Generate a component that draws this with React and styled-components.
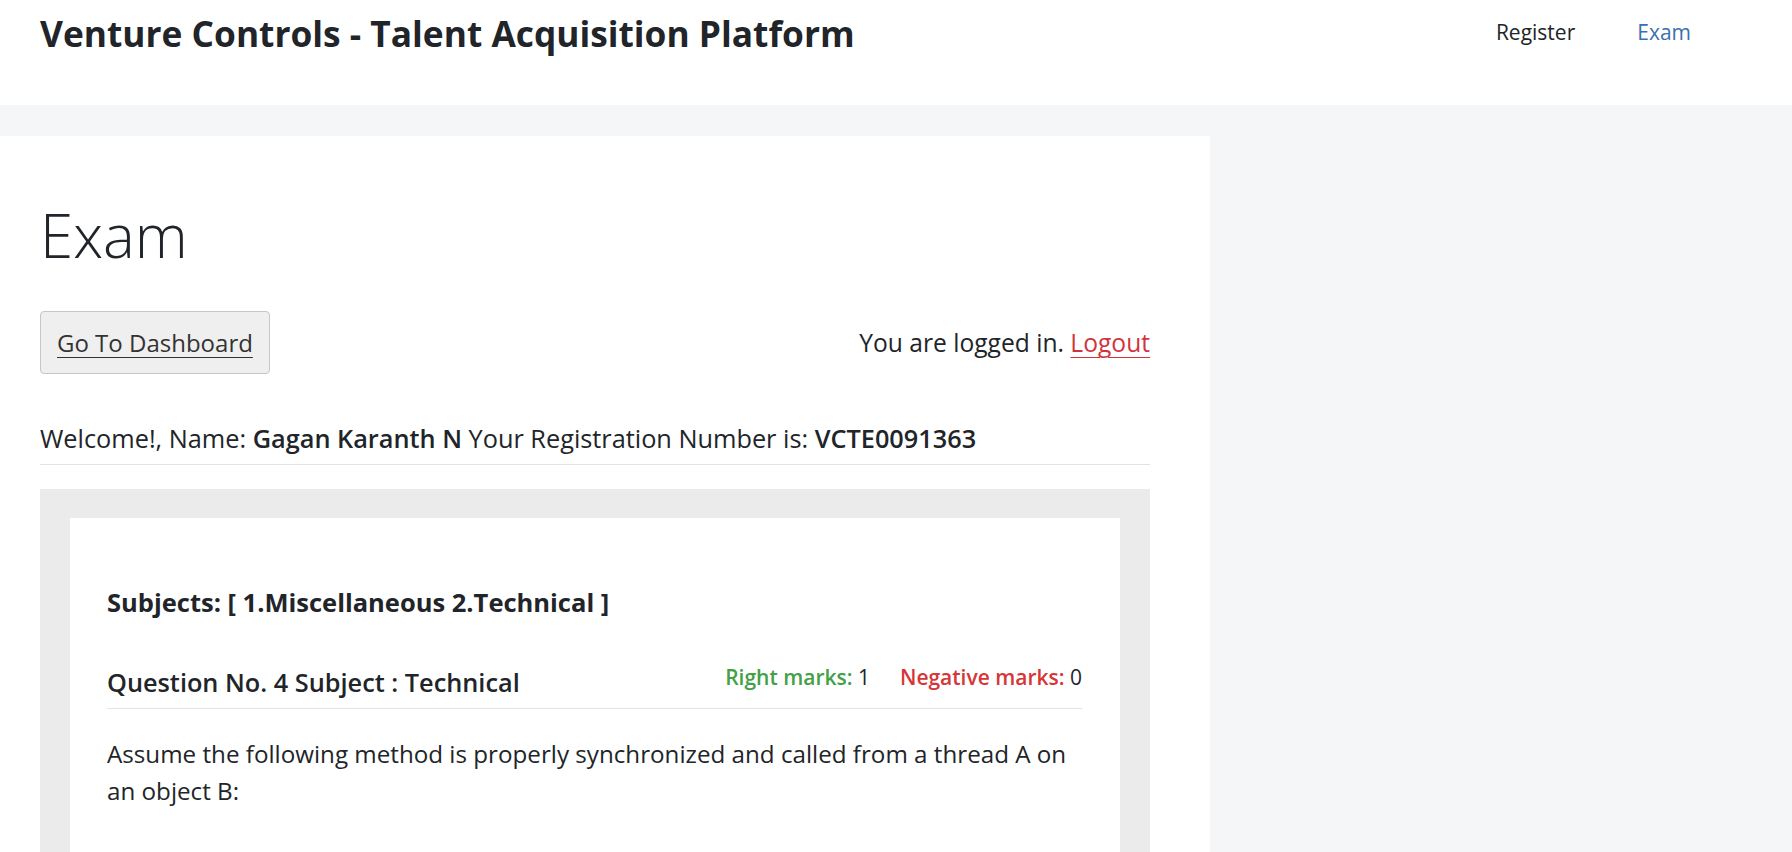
import React from 'react';
import styled, { createGlobalStyle } from 'styled-components';

const GlobalStyle = createGlobalStyle`
	html, body {
		margin: 0;
		padding: 0;
		background: #f5f6f8;
		font-family: 'Open Sans', 'Noto Sans', sans-serif;
		color: #212529;
		overflow: hidden;
	}
	* {
		box-sizing: border-box;
	}
`;

const Header = styled.header`
	display: flex;
	justify-content: space-between;
	align-items: flex-start;
	height: 105px;
	background: #ffffff;
	padding: 10px 101px 0 40px;
`;

const Brand = styled.div`
	font-size: 35.3px;
	font-weight: 700;
	line-height: 46px;
`;

const NavList = styled.nav`
	display: flex;
	gap: 62px;
	padding-top: 6px;
`;

const NavItem = styled.a`
	font-size: 21px;
	line-height: 32px;
	text-decoration: none;
	color: ${(p) => (p.active ? '#3a6fb0' : '#212529')};
`;

const Panel = styled.main`
	display: flex;
	flex-direction: column;
	width: 1210px;
	min-height: calc(100vh - 136px);
	margin-top: 31px;
	background: #ffffff;
	padding: 54px 60px 0 40px;
`;

const PageTitle = styled.h1`
	margin: 0 0 31px;
	font-size: 60px;
	font-weight: 300;
	line-height: 90px;
`;

const ActionRow = styled.div`
	display: flex;
	justify-content: space-between;
	align-items: center;
`;

const DashButton = styled.button`
	height: 63px;
	padding: 0 16px;
	background: #efefef;
	border: 1px solid #c6c6c6;
	border-radius: 4px;
	font-family: inherit;
	font-size: 24px;
	color: #333;
	text-decoration: underline;
	text-underline-offset: 5px;
	text-decoration-thickness: 1px;
	cursor: pointer;
`;

const LoginNote = styled.div`
	font-size: 24.6px;
`;

const LogoutLink = styled.a`
	color: #d1343e;
	text-decoration: underline;
	text-underline-offset: 5px;
	text-decoration-thickness: 1px;
`;

const Welcome = styled.div`
	margin-top: 44px;
	padding-bottom: 6px;
	border-bottom: 1px solid #e3e3e3;
	font-size: 25.3px;
	line-height: 40px;

	b {
		font-weight: 600;
	}
`;

const ExamFrame = styled.section`
	flex: 1;
	display: flex;
	flex-direction: column;
	margin-top: 24px;
	background: #ebebeb;
	padding: 29px 30px 0;
`;

const QuestionCard = styled.div`
	flex: 1;
	background: #ffffff;
	padding: 67px 38px 20px 37px;
`;

const Subjects = styled.h4`
	margin: 0 0 42px;
	font-size: 25.5px;
	font-weight: 700;
	line-height: 34px;
`;

const QuestionHead = styled.div`
	display: flex;
	justify-content: space-between;
	align-items: flex-end;
	padding-bottom: 10px;
	border-bottom: 1px solid #e3e3e3;
`;

const QuestionTitle = styled.h5`
	margin: 0;
	font-size: 25.3px;
	font-weight: 600;
	line-height: 32px;
`;

const Marks = styled.div`
	display: flex;
	gap: 30px;
	font-size: 21px;
	line-height: 32px;
	padding-bottom: 5px;
`;

const MarkLabel = styled.span`
	color: ${(p) => p.color};
	font-weight: 600;
`;

const QuestionText = styled.p`
	margin: 26px 0 0;
	font-size: 24.2px;
	line-height: 37px;
`;

export default function App() {
	return (
		<>
			<GlobalStyle />
			<Header>
				<Brand>Venture Controls - Talent Acquisition Platform</Brand>
				<NavList>
					<NavItem href="#">Register</NavItem>
					<NavItem href="#" active>
						Exam
					</NavItem>
				</NavList>
			</Header>

			<Panel>
				<PageTitle>Exam</PageTitle>
				<ActionRow>
					<DashButton>Go To Dashboard</DashButton>
					<LoginNote>
						You are logged in. <LogoutLink href="#">Logout</LogoutLink>
					</LoginNote>
				</ActionRow>

				<Welcome>
					Welcome!, Name: <b>Gagan Karanth N</b> Your Registration Number is:{' '}
					<b>VCTE0091363</b>
				</Welcome>

				<ExamFrame>
					<QuestionCard>
						<Subjects>Subjects: [ 1.Miscellaneous 2.Technical ]</Subjects>
						<QuestionHead>
							<QuestionTitle>Question No. 4 Subject : Technical</QuestionTitle>
							<Marks>
								<span>
									<MarkLabel color="#43a047">Right marks:</MarkLabel> 1
								</span>
								<span>
									<MarkLabel color="#d63638">Negative marks:</MarkLabel> 0
								</span>
							</Marks>
						</QuestionHead>
						<QuestionText>
							Assume the following method is properly synchronized and called from a
							thread A on an object B:
						</QuestionText>
					</QuestionCard>
				</ExamFrame>
			</Panel>
		</>
	);
}
